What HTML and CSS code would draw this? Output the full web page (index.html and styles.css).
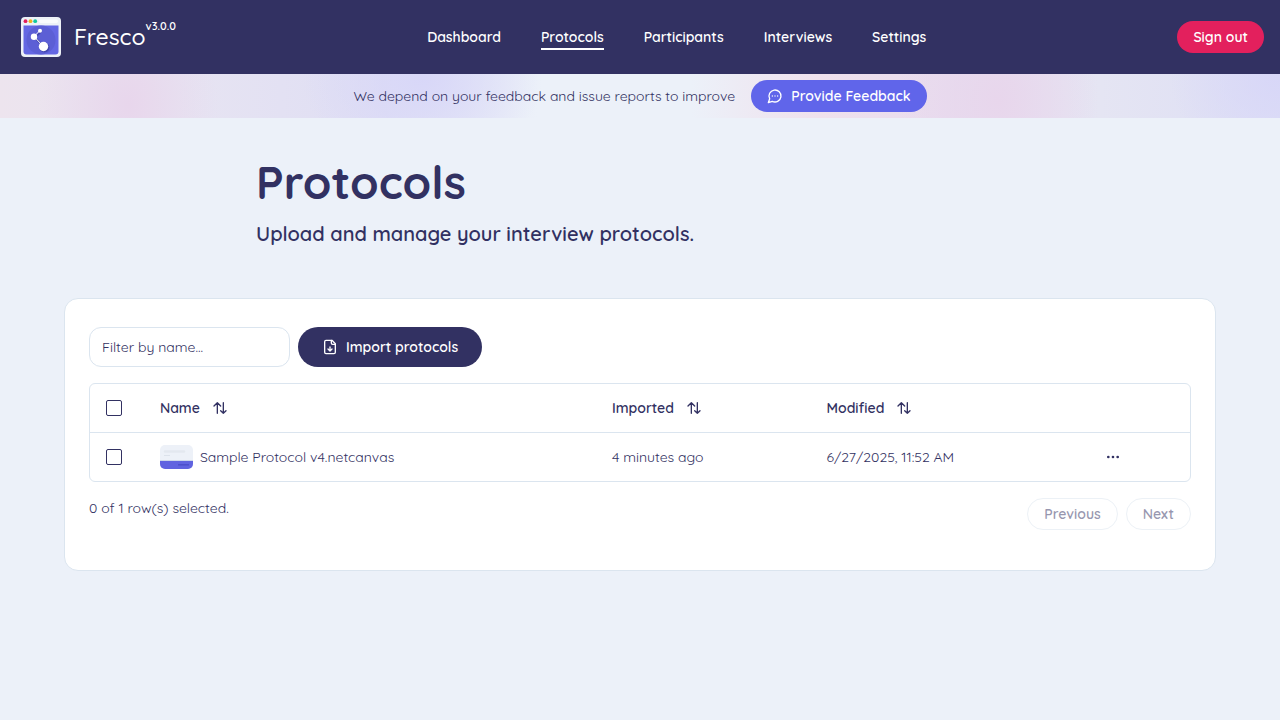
FILE: index.html
```html
<!DOCTYPE html>
<html lang="en">
<head>
<meta charset="utf-8">
<meta name="viewport" content="width=device-width, initial-scale=1">
<title>Fresco - Protocols</title>
<link rel="stylesheet" href="styles.css">
</head>
<body>
<header class="topbar">
  <a class="brand" href="#">
    <svg class="brand-logo" viewBox="0 0 42 42" aria-hidden="true">
      <rect x="1" y="1" width="40" height="40" rx="4" fill="#edf1f7"/>
      <path d="M3.500 9.500h35v26a3 3 0 0 1-3 3h-29a3 3 0 0 1-3-3z" fill="#6467e3"/>
      <circle cx="21" cy="24" r="14.500" fill="#5c5fd5"/>
      <circle cx="5.500" cy="5.200" r="1.900" fill="#e3205d"/>
      <circle cx="10.500" cy="5.200" r="1.900" fill="#f0b321"/>
      <circle cx="15.200" cy="5.200" r="1.900" fill="#0fc9a0"/>
      <rect x="19" y="3.500" width="19" height="3.500" rx="1.700" fill="#fafbfd"/>
      <path d="M24 31 15 21.500l6-6" fill="none" stroke="#4448b0" stroke-width="2"/>
      <path d="M23.500 30.500 14 20.500l6-6" fill="none" stroke="#fff" stroke-width="1"/>
      <circle cx="24.500" cy="31.500" r="5" fill="#4448b0"/>
      <circle cx="14" cy="20.800" r="3.200" fill="#fff"/>
      <circle cx="20" cy="14.800" r="2" fill="#fff"/>
      <circle cx="23.500" cy="30.500" r="4.700" fill="#fff"/>
    </svg>
    <span class="brand-name">Fresco</span><span class="brand-version">v3.0.0</span>
  </a>
  <nav class="menu">
    <a class="menu-link" href="#">Dashboard</a>
    <a class="menu-link menu-link-active" href="#" aria-current="page">Protocols</a>
    <a class="menu-link" href="#">Participants</a>
    <a class="menu-link" href="#">Interviews</a>
    <a class="menu-link" href="#">Settings</a>
  </nav>
  <button class="button button-danger" type="button">Sign out</button>
</header>
<div class="banner">
  <span>We depend on your feedback and issue reports to improve</span>
  <button class="button button-accent" type="button">
    <svg class="icon" viewBox="0 0 24 24" aria-hidden="true"><path d="M7.900 20A9 9 0 1 0 4 16.100L2 22Z"/><path d="M8 12h.01M12 12h.01M16 12h.01"/></svg>
    Provide Feedback
  </button>
</div>
<main>
  <div class="heading">
    <h1 class="title">Protocols</h1>
    <p class="lead">Upload and manage your interview protocols.</p>
  </div>
  <section class="panel">
    <div class="toolbar">
      <input class="filter" type="text" placeholder="Filter by name..." aria-label="Filter by name">
      <button class="button button-primary" type="button">
        <svg class="icon" viewBox="0 0 24 24" aria-hidden="true"><path d="M15 2H6a2 2 0 0 0-2 2v16a2 2 0 0 0 2 2h12a2 2 0 0 0 2-2V7Z"/><path d="M14 2v4a2 2 0 0 0 2 2h4M12 18v-6m-3 3 3 3 3-3"/></svg>
        Import protocols
      </button>
    </div>
    <div class="table-frame">
      <table class="table">
        <colgroup><col class="col-check"><col class="col-name"><col class="col-imported"><col class="col-modified"><col class="col-actions"></colgroup>
        <thead>
          <tr>
            <th><input class="check" type="checkbox" aria-label="Select all"></th>
            <th><button class="sort" type="button">Name <svg class="icon" viewBox="0 0 24 24" aria-hidden="true"><path d="M8 20V4M3 9l5-5 5 5M17 4v16M13 16l4 4 4-4"/></svg></button></th>
            <th><button class="sort" type="button">Imported <svg class="icon" viewBox="0 0 24 24" aria-hidden="true"><path d="M8 20V4M3 9l5-5 5 5M17 4v16M13 16l4 4 4-4"/></svg></button></th>
            <th><button class="sort" type="button">Modified <svg class="icon" viewBox="0 0 24 24" aria-hidden="true"><path d="M8 20V4M3 9l5-5 5 5M17 4v16M13 16l4 4 4-4"/></svg></button></th>
            <th></th>
          </tr>
        </thead>
        <tbody>
          <tr>
            <td><input class="check" type="checkbox" aria-label="Select row"></td>
            <td>
              <div class="protocol">
                <svg class="thumb" viewBox="0 0 33 24" aria-hidden="true"><rect width="33" height="24" rx="5" fill="#edf1f8"/><path d="M0 16h33v3a5 5 0 0 1-5 5H5a5 5 0 0 1-5-5z" fill="#6063e0"/><path d="M0 15.500h33" stroke="#cdd8ea"/><path d="M5 6.500h19" stroke="#e3e8ef" stroke-width="2.500" stroke-linecap="round"/><path d="M4 10.500h6" stroke="#dce2eb"/><path d="M18 19.800h11" stroke="#4c50cb" stroke-width="1.500"/></svg>
                <span>Sample Protocol v4.netcanvas</span>
              </div>
            </td>
            <td>4 minutes ago</td>
            <td>6/27/2025, 11:52 AM</td>
            <td>
              <button class="more" type="button" aria-label="Open menu"><svg class="icon" viewBox="0 0 24 24" aria-hidden="true"><g fill="currentColor"><circle cx="5" cy="12" r="1"/><circle cx="12" cy="12" r="1"/><circle cx="19" cy="12" r="1"/></g></svg></button>
            </td>
          </tr>
        </tbody>
      </table>
    </div>
    <div class="table-footer">
      <span>0 of 1 row(s) selected.</span>
      <div class="pager">
        <button class="button button-outline" type="button" disabled>Previous</button>
        <button class="button button-outline" type="button" disabled>Next</button>
      </div>
    </div>
  </section>
</main>
</body>
</html>
```
FILE: styles.css
```css
* { box-sizing: border-box; }

body {
  margin: 0;
  min-height: 100vh;
  background: #ecf1f9;
  color: #323162;
  font-family: Quicksand, Inter, "Open Sans", sans-serif;
  font-size: 14px;
  line-height: 20px;
}

button, input { font: inherit; color: inherit; margin: 0; }
button { padding: 0; border: 0; background: none; cursor: pointer; }
a { color: inherit; text-decoration: none; }

.icon {
  width: 16px;
  height: 16px;
  fill: none;
  stroke: currentColor;
  stroke-width: 2;
  stroke-linecap: round;
  stroke-linejoin: round;
}

.topbar {
  display: flex;
  align-items: center;
  justify-content: space-between;
  padding: 16px 16px 16px 20px;
  background: #323162;
  color: #fff;
}

.brand { display: flex; align-items: center; }
.brand-logo { width: 42px; height: 42px; margin-right: 12px; }
.brand-name { font-size: 23px; line-height: 28px; font-weight: 500; }
.brand-version { align-self: flex-start; font-size: 11px; font-weight: 600; }

.menu { display: flex; gap: 40px; }
.menu-link { padding: 3px 0 1px; border-bottom: 2px solid transparent; font-weight: 600; }
.menu-link-active { border-color: #fff; }

.button {
  display: inline-flex;
  align-items: center;
  gap: 8px;
  height: 32px;
  padding: 0 16px;
  border-radius: 20px;
  font-weight: 600;
  white-space: nowrap;
}
.button-danger { background: #e3205d; color: #fff; }
.button-accent { background: #6065ea; color: #fff; }
.button-primary { height: 40px; padding: 0 24px; background: #323162; color: #fff; }
.button-outline { border: 1px solid #dbe5ef; opacity: 0.5; cursor: default; }

.banner {
  display: flex;
  align-items: center;
  justify-content: center;
  gap: 16px;
  padding: 6px 16px;
  font-weight: 400;
  background:
    radial-gradient(ellipse 120px 90px at 33% 10%, #d8d7f8, #d8d7f800),
    radial-gradient(ellipse 90px 120px at 10% 70%, #e8d6ec, #e8d6ec00),
    radial-gradient(ellipse 100px 120px at 78% 60%, #e8d6ec, #e8d6ec00),
    radial-gradient(ellipse 110px 90px at 100% 10%, #d8d7f8, #d8d7f800),
    linear-gradient(90deg, #ede4ee 0%, #e7e4f2 14%, #dfdef4 30%, #ecf1f9 42%, #ecf1f9 54%, #efe1ed 64%, #e8dcef 74%, #e5e5f3 86%, #dddef5 100%);
}

.heading { max-width: 768px; margin: 0 auto; padding: 34px 0 50px; }
.title { margin: 0; font-size: 46px; line-height: 60px; font-weight: 700; }
.lead { margin: 8px 0 0; font-size: 20px; line-height: 28px; font-weight: 600; }

.panel {
  margin: 0 64px;
  padding: 28px 24px 40px;
  border: 1px solid #dbe5ef;
  border-radius: 14px;
  background: #fff;
}

.toolbar { display: flex; gap: 8px; }
.filter {
  width: 201px;
  height: 40px;
  padding: 0 12px;
  border: 1px solid #dbe5ef;
  border-radius: 12px;
  background: #fff;
}
.filter::placeholder { color: #323162; opacity: 1; font-weight: 400; }

.table-frame { margin: 16px 0; border: 1px solid #dbe5ef; border-radius: 6px; }
.table { width: 100%; table-layout: fixed; border-collapse: separate; border-spacing: 0; text-align: left; }
.col-check { width: 4.9%; }
.col-name { width: 41.1%; }
.col-imported { width: 19.5%; }
.col-modified { width: 24.6%; }
.col-actions { width: 9.9%; }
.table th, .table td { height: 49px; padding: 0 16px; vertical-align: middle; }
.table th { border-bottom: 1px solid #dbe5ef; font-weight: 600; }
.table td { height: 48px; font-weight: 400; }

.check {
  display: block;
  appearance: none;
  width: 16px;
  height: 16px;
  border: 1px solid #323162;
  border-radius: 2px;
}
.sort { display: flex; align-items: center; gap: 12px; font-weight: 600; }
.protocol { display: flex; align-items: center; gap: 7px; }
.thumb { width: 33px; height: 24px; }
.more { display: flex; align-items: center; justify-content: center; width: 32px; height: 32px; }

.table-footer { display: flex; justify-content: space-between; font-weight: 400; }
.pager { display: flex; gap: 8px; }
```
